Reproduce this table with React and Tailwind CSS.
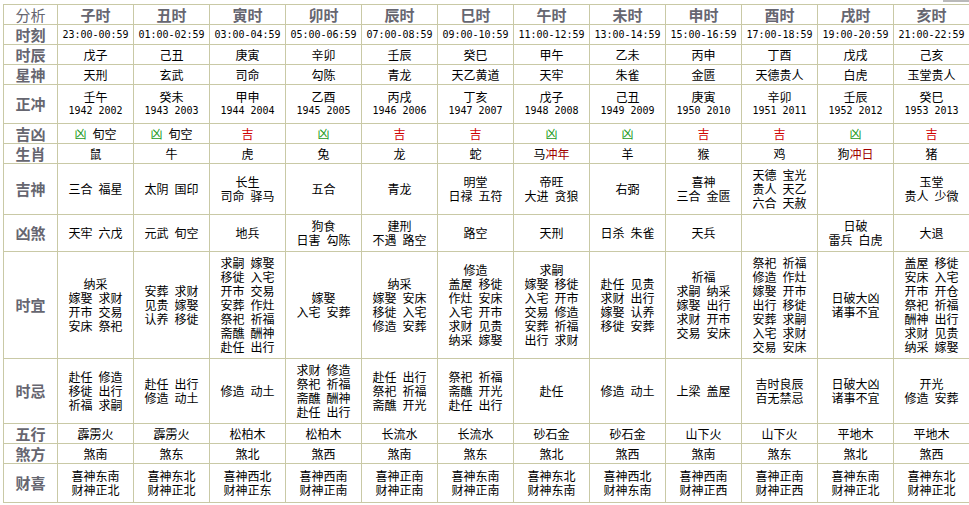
const hours = ['子时', '丑时', '寅时', '卯时', '辰时', '巳时', '午时', '未时', '申时', '酉时', '戌时', '亥时'];
const times = ['23:00-00:59', '01:00-02:59', '03:00-04:59', '05:00-06:59', '07:00-08:59', '09:00-10:59', '11:00-12:59', '13:00-14:59', '15:00-16:59', '17:00-18:59', '19:00-20:59', '21:00-22:59'];
const shichen = ['戊子', '己丑', '庚寅', '辛卯', '壬辰', '癸巳', '甲午', '乙未', '丙申', '丁酉', '戊戌', '己亥'];
const xingshen = ['天刑', '玄武', '司命', '勾陈', '青龙', '天乙黄道', '天牢', '朱雀', '金匮', '天德贵人', '白虎', '玉堂贵人'];
const zhengchong = [
  ['壬午', '1942 2002'], ['癸未', '1943 2003'], ['甲申', '1944 2004'], ['乙酉', '1945 2005'],
  ['丙戌', '1946 2006'], ['丁亥', '1947 2007'], ['戊子', '1948 2008'], ['己丑', '1949 2009'],
  ['庚寅', '1950 2010'], ['辛卯', '1951 2011'], ['壬辰', '1952 2012'], ['癸巳', '1953 2013'],
];
const jixiong = [
  ['凶', '旬空'], ['凶', '旬空'], ['吉'], ['凶'], ['吉'], ['吉'],
  ['凶'], ['凶'], ['吉'], ['吉'], ['凶'], ['吉'],
];
const shengxiao = [
  ['鼠'], ['牛'], ['虎'], ['兔'], ['龙'], ['蛇'], ['马', '冲年'], ['羊'], ['猴'], ['鸡'], ['狗', '冲日'], ['猪'],
];
const jishen = [
  ['三合 福星'], ['太阴 国印'], ['长生', '司命 驿马'], ['五合'], ['青龙'], ['明堂', '日禄 五符'],
  ['帝旺', '大进 贪狼'], ['右弼'], ['喜神', '三合 金匮'], ['天德 宝光', '贵人 天乙', '六合 天赦'], [], ['玉堂', '贵人 少微'],
];
const xiongsha = [
  ['天牢 六戊'], ['元武 旬空'], ['地兵'], ['狗食', '日害 勾陈'], ['建刑', '不遇 路空'], ['路空'],
  ['天刑'], ['日杀 朱雀'], ['天兵'], [], ['日破', '雷兵 白虎'], ['大退'],
];
const shiyi = [
  ['纳采', '嫁娶 求财', '开市 交易', '安床 祭祀'],
  ['安葬 求财', '见贵 嫁娶', '认养 移徙'],
  ['求嗣 嫁娶', '移徙 入宅', '开市 交易', '安葬 作灶', '祭祀 祈福', '斋醮 酬神', '赴任 出行'],
  ['嫁娶', '入宅 安葬'],
  ['纳采', '嫁娶 安床', '移徙 入宅', '修造 安葬'],
  ['修造', '盖屋 移徙', '作灶 安床', '入宅 开市', '求财 见贵', '纳采 嫁娶'],
  ['求嗣', '嫁娶 移徙', '入宅 开市', '交易 修造', '安葬 祈福', '出行 求财'],
  ['赴任 见贵', '求财 出行', '嫁娶 认养', '移徙 安葬'],
  ['祈福', '求嗣 纳采', '嫁娶 出行', '求财 开市', '交易 安床'],
  ['祭祀 祈福', '修造 作灶', '嫁娶 开市', '出行 移徙', '安葬 求嗣', '入宅 求财', '交易 安床'],
  ['日破大凶', '诸事不宜'],
  ['盖屋 移徙', '安床 入宅', '开市 开仓', '祭祀 祈福', '酬神 出行', '求财 见贵', '纳采 嫁娶'],
];
const shiji = [
  ['赴任 修造', '移徙 出行', '祈福 求嗣'],
  ['赴任 出行', '修造 动土'],
  ['修造 动土'],
  ['求财 修造', '祭祀 祈福', '斋醮 酬神', '赴任 出行'],
  ['赴任 出行', '祭祀 祈福', '斋醮 开光'],
  ['祭祀 祈福', '斋醮 开光', '赴任 出行'],
  ['赴任'],
  ['修造 动土'],
  ['上梁 盖屋'],
  ['吉时良辰', '百无禁忌'],
  ['日破大凶', '诸事不宜'],
  ['开光', '修造 安葬'],
];
const wuxing = ['霹雳火', '霹雳火', '松柏木', '松柏木', '长流水', '长流水', '砂石金', '砂石金', '山下火', '山下火', '平地木', '平地木'];
const shafang = ['煞南', '煞东', '煞北', '煞西', '煞南', '煞东', '煞北', '煞西', '煞南', '煞东', '煞北', '煞西'];
const caixi = [
  ['喜神东南', '财神正北'], ['喜神东北', '财神正北'], ['喜神西北', '财神正东'], ['喜神西南', '财神正南'],
  ['喜神正南', '财神正南'], ['喜神东南', '财神正南'], ['喜神东北', '财神东南'], ['喜神西北', '财神东南'],
  ['喜神西南', '财神正西'], ['喜神正南', '财神正西'], ['喜神东南', '财神正北'], ['喜神东北', '财神正北'],
];

const cjk = { fontFamily: '"Noto Sans CJK SC", "DejaVu Sans", sans-serif' };
const mono = { fontFamily: '"DejaVu Sans Mono", "Noto Sans CJK SC", monospace' };

const cell = 'border border-[#c9c9a6] text-center align-middle p-0 whitespace-nowrap';
const td = cell + ' text-[12px] leading-[14px] text-black';
const tdTime = cell + ' text-[10px] leading-[14px] text-black';
const th = cell + ' text-[15px] leading-[18px] font-bold text-[#666670]';
const thPlain = cell + ' text-[15px] leading-[18px] font-normal text-[#666670]';

// one line of words, spaced like the old page's half-width blank
const Words = ({ text }) => (
  <span className="flex justify-center gap-[6px]">
    {text.split(' ').map((w, i) => (
      <span key={i}>{w}</span>
    ))}
  </span>
);

const Lines = ({ lines }) => (
  <div className="flex flex-col items-center">
    {lines.map((l, i) => (
      <Words key={i} text={l} />
    ))}
  </div>
);

const Row = ({ label, h, children }) => (
  <tr className={h}>
    <td className={th}>{label}</td>
    {children}
  </tr>
);

const Simple = ({ items }) =>
  items.map((t, i) => (
    <td key={i} className={td}>
      {t}
    </td>
  ));

const Multi = ({ items }) =>
  items.map((l, i) => (
    <td key={i} className={td}>
      <Lines lines={l} />
    </td>
  ));

export default function App() {
  return (
    <div className="bg-white w-[969px] h-[505px] overflow-hidden" style={cjk}>
      <div className="h-[4px] flex justify-end">
        <div className="w-[26px] h-[2px] bg-[#b9b9b9]" />
      </div>
      <table className="ml-[3px] border-collapse table-fixed w-[966px]">
        <colgroup>
          <col className="w-[54px]" />
          {hours.map((h) => (
            <col key={h} className="w-[76px]" />
          ))}
        </colgroup>
        <tbody>
          <tr className="h-[20px]">
            <td className={thPlain}>分析</td>
            {hours.map((h) => (
              <td key={h} className={th}>
                {h}
              </td>
            ))}
          </tr>
          <Row label="时刻" h="h-[20px]">
            {times.map((t) => (
              <td key={t} className={tdTime} style={mono}>
                {t}
              </td>
            ))}
          </Row>
          <Row label="时辰" h="h-[20px]">
            <Simple items={shichen} />
          </Row>
          <Row label="星神" h="h-[20px]">
            <Simple items={xingshen} />
          </Row>
          <Row label="正冲" h="h-[39px]">
            {zhengchong.map(([a, b], i) => (
              <td key={i} className={td}>
                <div className="flex flex-col items-center">
                  <span>{a}</span>
                  <span className="text-[10px] leading-[14px]" style={mono}>
                    {b}
                  </span>
                </div>
              </td>
            ))}
          </Row>
          <Row label="吉凶" h="h-[20px]">
            {jixiong.map(([a, b], i) => (
              <td key={i} className={td}>
                <span className="inline-flex gap-[6px]">
                  <span className={a === '吉' ? 'text-[#d00000]' : 'text-[#1c9a1c]'}>{a}</span>
                  {b && <span>{b}</span>}
                </span>
              </td>
            ))}
          </Row>
          <Row label="生肖" h="h-[20px]">
            {shengxiao.map(([a, b], i) => (
              <td key={i} className={td}>
                {a}
                {b && <span className="text-[#a00000]">{b}</span>}
              </td>
            ))}
          </Row>
          <Row label="吉神" h="h-[51px]">
            <Multi items={jishen} />
          </Row>
          <Row label="凶煞" h="h-[37px]">
            <Multi items={xiongsha} />
          </Row>
          <Row label="时宜" h="h-[107px]">
            <Multi items={shiyi} />
          </Row>
          <Row label="时忌" h="h-[65px]">
            <Multi items={shiji} />
          </Row>
          <Row label="五行" h="h-[20px]">
            <Simple items={wuxing} />
          </Row>
          <Row label="煞方" h="h-[20px]">
            <Simple items={shafang} />
          </Row>
          <Row label="财喜" h="h-[39px]">
            <Multi items={caixi} />
          </Row>
        </tbody>
      </table>
    </div>
  );
}
